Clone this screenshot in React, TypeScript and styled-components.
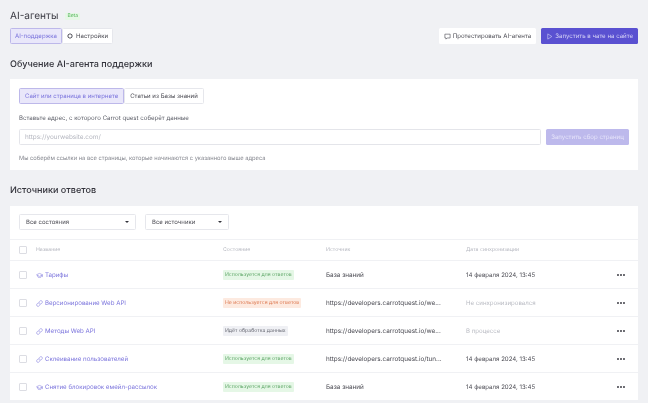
import React from "react";
import styled, { createGlobalStyle } from "styled-components";
import { GraduationCap, Link as LinkGlyph } from "lucide-react";

const GlobalStyle = createGlobalStyle`
    html, body {
        margin: 0;
        padding: 0;
        height: 100%;
        overflow: hidden;
        background: #f0f1f4;
        font-family: "Inter", "Liberation Sans", sans-serif;
        color: #2b2b33;
        text-rendering: geometricPrecision;
        -webkit-font-smoothing: antialiased;
    }
`;

const Page = styled.div`
    width: 648px;
    height: 403px;
    overflow: hidden;
    box-sizing: border-box;
    padding: 10px 10px 0 10px;
    will-change: transform;
`;

const TitleRow = styled.div`
    display: flex;
    align-items: center;
    gap: 7px;
    height: 13px;
`;

const Title = styled.h1`
    margin: 0;
    font-size: 10.1px;
    line-height: 13px;
    font-weight: 400;
    color: #3a3a42;
`;

const Beta = styled.span`
    font-size: 5px;
    line-height: 7px;
    padding: 0 2px;
    background: #e6f7e6;
    color: #56b85c;
    border-radius: 1px;
`;

const Toolbar = styled.div`
    display: flex;
    align-items: center;
    margin-top: 5px;
    height: 16px;
`;

const Tabs = styled.div`
    display: flex;
    height: 100%;
`;

const Tab = styled.div<{ $active?: boolean; $pad?: number }>`
    display: flex;
    align-items: center;
    gap: 3px;
    box-sizing: border-box;
    height: 100%;
    padding: 0 ${(p) => p.$pad ?? 5}px;
    font-size: 6.05px;
    white-space: nowrap;
    border: 1px solid ${(p) => (p.$active ? "#bdb8ea" : "#e6e7ec")};
    background: ${(p) => (p.$active ? "#e9e7fa" : "#ffffff")};
    color: ${(p) => (p.$active ? "#7a73dc" : "#4a4a52")};
    border-radius: 1.5px;
`;

const Actions = styled.div`
    margin-left: auto;
    display: flex;
    gap: 5px;
    height: 100%;
`;

const Button = styled.div<{ $primary?: boolean }>`
    display: flex;
    align-items: center;
    gap: 2px;
    box-sizing: border-box;
    height: 100%;
    padding: 0 5px;
    font-size: 6.1px;
    border-radius: 1.5px;
    white-space: nowrap;
    background: ${(p) => (p.$primary ? "#5a51d1" : "#ffffff")};
    color: ${(p) => (p.$primary ? "#d8d5f7" : "#4a4a52")};
`;

const SectionTitle = styled.h2<{ $top: number }>`
    margin: ${(p) => p.$top}px 0 0 0;
    font-size: 9.05px;
    line-height: 14px;
    font-weight: 500;
    color: #33333b;
`;

const Card = styled.div<{ $top: number }>`
    margin-top: ${(p) => p.$top}px;
    background: #ffffff;
`;

const TrainBody = styled.div`
    height: 91px;
    box-sizing: border-box;
    padding: 9px 9px 0 9px;
`;

const InnerTabs = styled.div`
    display: flex;
    height: 16px;
`;

const FieldLabel = styled.div`
    margin-top: 10px;
    font-size: 6.1px;
    line-height: 9px;
    color: #5a5c66;
`;

const InputRow = styled.div`
    display: flex;
    gap: 5px;
    height: 16px;
    margin-top: 6px;
`;

const UrlInput = styled.div`
    flex: 1;
    box-sizing: border-box;
    display: flex;
    align-items: center;
    padding: 0 5px;
    font-size: 6.4px;
    color: #b4b6bf;
    border: 1px solid #e4e5ea;
    border-radius: 1.5px;
`;

const DisabledButton = styled.div`
    width: 83px;
    display: flex;
    align-items: center;
    justify-content: center;
    font-size: 6.1px;
    white-space: nowrap;
    color: #e6e4fa;
    background: #bdb9ec;
    border-radius: 1.5px;
`;

const Hint = styled.div`
    margin-top: 9px;
    font-size: 5.75px;
    line-height: 9px;
    color: #85878f;
`;

const Filters = styled.div`
    display: flex;
    gap: 9px;
    height: 33px;
    box-sizing: border-box;
    padding: 8px 9px 0 9px;
`;

const Filter = styled.div<{ $width: number }>`
    width: ${(p) => p.$width}px;
    height: 16px;
    box-sizing: border-box;
    display: flex;
    align-items: center;
    justify-content: space-between;
    padding: 0 6px;
    font-size: 6px;
    color: #4a4a52;
    border: 1px solid #e6e7ec;
    border-radius: 1.5px;
`;

const Caret = styled.span`
    width: 0;
    height: 0;
    border-left: 2px solid transparent;
    border-right: 2px solid transparent;
    border-top: 2.5px solid #33333b;
`;

const Row = styled.div<{ $header?: boolean }>`
    display: grid;
    grid-template-columns: 17px 187px 103px 140px 151px 1fr;
    align-items: center;
    box-sizing: border-box;
    height: ${(p) => (p.$header ? 21 : 28)}px;
    padding-left: 9px;
    padding-top: ${(p) => (p.$header ? 0 : 1)}px;
    border-top: 1px solid #f0f1f4;
`;

const Checkbox = styled.span`
    display: block;
    width: 8px;
    height: 8px;
    box-sizing: border-box;
    border: 1px solid #dcdde3;
    border-radius: 1px;
`;

const HeadCell = styled.span`
    font-size: 5.2px;
    color: #b4b6bf;
`;

const NameCell = styled.span`
    display: flex;
    align-items: center;
    gap: 2px;
    font-size: 6.15px;
    color: #7a73dc;
    white-space: nowrap;
`;

const Badge = styled.span<{ $kind: "ok" | "off" | "busy" }>`
    justify-self: start;
    font-size: 5.15px;
    line-height: 10px;
    padding: 0 2px;
    border-radius: 1px;
    white-space: nowrap;
    background: ${(p) => (p.$kind === "ok" ? "#e5f7e6" : p.$kind === "off" ? "#fdeae0" : "#eff0f4")};
    color: ${(p) => (p.$kind === "ok" ? "#5fa768" : p.$kind === "off" ? "#dd7a52" : "#6a6c76")};
`;

const TextCell = styled.span`
    font-size: 6.35px;
    color: #4a4a52;
    white-space: nowrap;
`;

const DateCell = styled.span<{ $muted?: boolean }>`
    font-size: 6.1px;
    white-space: nowrap;
    color: ${(p) => (p.$muted ? "#b8bac2" : "#4a4a52")};
`;

const Dots = styled.span`
    display: flex;
    gap: 1.4px;
    span {
        width: 1.8px;
        height: 1.8px;
        border-radius: 50%;
        background: #44444c;
    }
`;

const Icon = styled.svg`
    flex: none;
    display: block;
`;

const NameIcon = styled.span`
    display: flex;
    flex: none;
    color: #8a84e0;
`;

const GearIcon = () => (
    <Icon width="6" height="6" viewBox="0 0 24 24" fill="none" stroke="#44444c" strokeWidth="3.5">
        <path d="M12 3l8 4.5v9L12 21l-8-4.5v-9z" />
    </Icon>
);

const ChatIcon = () => (
    <Icon width="7" height="7" viewBox="0 0 24 24" fill="none" stroke="#44444c" strokeWidth="2">
        <path d="M3 4h18v13H11l-4 4v-4H3z" />
    </Icon>
);

const PlayIcon = () => (
    <Icon width="7" height="7" viewBox="0 0 24 24" fill="none" stroke="#d8d5f7" strokeWidth="2">
        <path d="M6 3l14 9-14 9z" />
    </Icon>
);

interface Source {
    name: string;
    icon: "cap" | "link";
    kind: "ok" | "off" | "busy";
    state: string;
    source: string;
    date: string;
    muted?: boolean;
}

const OK = "Используется для ответов";
const SYNC = "14 февраля 2024, 13:45";

const sources: Source[] = [
    { name: "Тарифы", icon: "cap", kind: "ok", state: OK, source: "База знаний", date: SYNC },
    { name: "Версионирование Web API", icon: "link", kind: "off", state: "Не используется для ответов", source: "https://developers.carrotquest.io/we...", date: "Не синхронизировался", muted: true },
    { name: "Методы Web API", icon: "link", kind: "busy", state: "Идёт обработка данных", source: "https://developers.carrotquest.io/we...", date: "В процессе", muted: true },
    { name: "Склеивание пользователей", icon: "link", kind: "ok", state: OK, source: "https://developers.carrotquest.io/tun...", date: SYNC },
    { name: "Снятие блокировок емейл-рассылок", icon: "cap", kind: "ok", state: OK, source: "База знаний", date: SYNC },
];

const App = () => {
    return (
        <React.Fragment>
            <GlobalStyle />
            <Page>
                <TitleRow>
                    <Title>AI-агенты</Title>
                    <Beta>Beta</Beta>
                </TitleRow>
                <Toolbar>
                    <Tabs>
                        <Tab $active $pad={4}>AI-поддержка</Tab>
                        <Tab $pad={4}><GearIcon />Настройки</Tab>
                    </Tabs>
                    <Actions>
                        <Button><ChatIcon />Протестировать AI-агента</Button>
                        <Button $primary><PlayIcon />Запустить в чате на сайте</Button>
                    </Actions>
                </Toolbar>

                <SectionTitle $top={14}>Обучение AI-агента поддержки</SectionTitle>
                <Card $top={7}>
                    <TrainBody>
                        <InnerTabs>
                            <Tab $active>Сайт или страница в интернете</Tab>
                            <Tab>Статьи из Базы знаний</Tab>
                        </InnerTabs>
                        <FieldLabel>Вставьте адрес, с которого Carrot quest соберёт данные</FieldLabel>
                        <InputRow>
                            <UrlInput>https://yourwebsite.com/</UrlInput>
                            <DisabledButton>Запустить сбор страниц</DisabledButton>
                        </InputRow>
                        <Hint>Мы соберём ссылки на все страницы, которые начинаются с указанного выше адреса</Hint>
                    </TrainBody>
                </Card>

                <SectionTitle $top={14}>Источники ответов</SectionTitle>
                <Card $top={8}>
                    <Filters>
                        <Filter $width={117}>Все состояния<Caret /></Filter>
                        <Filter $width={84}>Все источники<Caret /></Filter>
                    </Filters>
                    <Row $header>
                        <Checkbox />
                        <HeadCell>Название</HeadCell>
                        <HeadCell>Состояние</HeadCell>
                        <HeadCell>Источник</HeadCell>
                        <HeadCell>Дата синхронизации</HeadCell>
                    </Row>
                    {sources.map((s) => (
                        <Row key={s.name}>
                            <Checkbox />
                            <NameCell>
                                <NameIcon>
                                    {s.icon === "cap" ? <GraduationCap size={7} strokeWidth={2} /> : <LinkGlyph size={7} strokeWidth={2} />}
                                </NameIcon>
                                {s.name}
                            </NameCell>
                            <Badge $kind={s.kind}>{s.state}</Badge>
                            <TextCell>{s.source}</TextCell>
                            <DateCell $muted={s.muted}>{s.date}</DateCell>
                            <Dots><span /><span /><span /></Dots>
                        </Row>
                    ))}
                </Card>
            </Page>
        </React.Fragment>
    );
};

export default App;
